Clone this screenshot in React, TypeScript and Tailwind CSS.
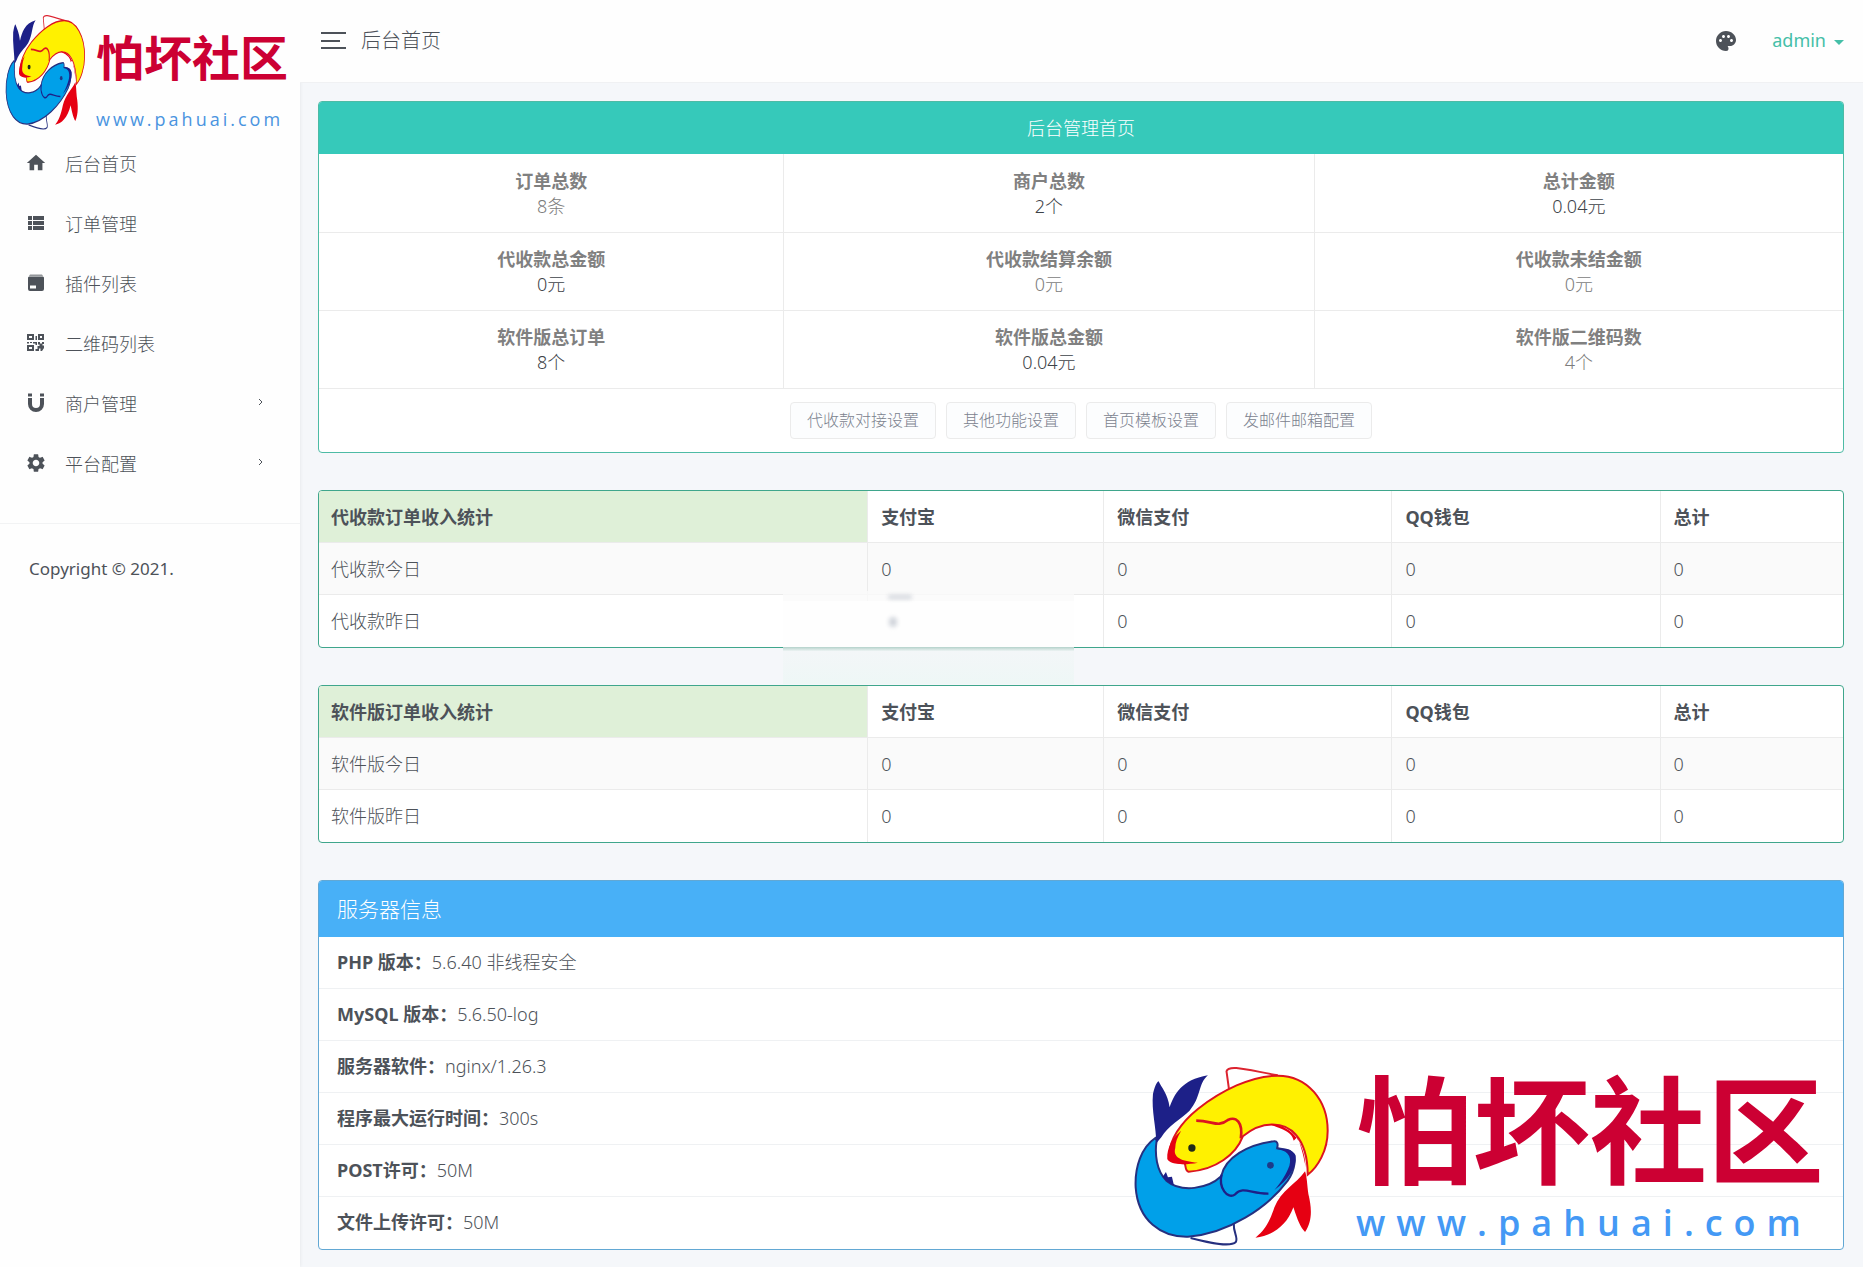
import React from "react";
import { MdHome, MdPalette, MdSettings } from "react-icons/md";

function FishMark({ className }: { className: string }) {
  return (
    <svg className={className} viewBox="95 70 595 555" preserveAspectRatio="none" aria-hidden="true">
      <path
        d="M160 295 C200 240 250 230 300 330 L520 240 L625 400 L560 440 L420 530 L110 470Z"
        fill="#fff"
      />
      <path d="M384 150 L376 92 C382 70 440 88 530 104" fill="#fff" stroke="#dc2430" strokeWidth="6" />
      <path d="M398 550 C396 576 412 590 404 604 C388 620 330 608 268 592" fill="#fff" stroke="#26307f" strokeWidth="6" />
      <path
        d="M206 348 C200 300 240 245 290 205 C360 150 450 105 530 105 C620 105 680 180 680 270 C680 330 650 380 620 402 C620 350 608 310 585 283 C550 240 480 240 425 287 C405 340 345 388 262 393 C250 390 255 375 250 368 C230 368 215 362 206 348Z"
        fill="#fff100"
        stroke="#dc1420"
        strokeWidth="6"
      />
      <path d="M222 322 C214 350 240 362 290 366 C250 374 205 372 198 355 C196 320 215 290 240 270 C228 290 222 305 222 322Z" fill="#e60012" />
      <path d="M285 240 C335 240 350 262 380 238 C405 226 426 245 419 293" fill="none" stroke="#dc1420" strokeWidth="8" />
      <path d="M500 250 C560 250 610 290 614 380 C606 340 600 315 588 290 L578 300 C575 285 565 268 500 250Z" fill="#e60012" />
      <path
        d="M612 392 C585 430 540 450 520 500 C505 545 490 570 463 591 C510 585 555 560 577 500 C590 540 598 560 612 574 C635 540 632 500 622 460 C618 430 618 410 612 392Z"
        fill="#e60012"
      />
      <path
        d="M162 292 C120 320 100 380 103 440 C110 540 180 590 260 588 C380 580 500 500 560 420 C580 390 592 345 565 330 C550 324 538 326 528 322 C532 310 528 300 518 302 C440 312 372 350 360 407 C320 445 240 457 195 420 C165 390 160 340 166 300Z"
        fill="#00a0e9"
        stroke="#26307f"
        strokeWidth="6"
      />
      <path d="M522 326 C556 326 574 345 565 375 C555 400 545 418 520 448 C560 418 588 380 584 345 C575 325 548 322 522 326Z" fill="#1d2088" />
      <path d="M361 402 C352 440 378 478 402 461 C425 435 450 460 502 459" fill="none" stroke="#1d2088" strokeWidth="7" />
      <path d="M184 408 L194 394 L200 410 L212 408 L218 434 C205 430 192 420 184 408Z" fill="#1d2088" />
      <path
        d="M165 308 C165 260 150 210 155 160 C160 140 165 125 172 122 C180 140 200 160 205 200 C220 160 240 118 320 104 C290 130 300 170 265 210 C240 235 200 255 180 290Z"
        fill="#1d2088"
      />
      <circle cx="272" cy="322" r="11" fill="#222a18" />
      <circle cx="508" cy="374" r="10" fill="#1d3a88" />
    </svg>
  );
}

const iconClass = "h-[22px] w-[22px] shrink-0 fill-[#4d5259]";

function ListIcon() {
  return (
    <svg className={iconClass} viewBox="0 0 22 22" aria-hidden="true">
      <path d="M3 4h4v4H3zM8 4h11v4H8zM3 9h4v4H3zM8 9h11v4H8zM3 14h4v4H3zM8 14h11v4H8z" />
    </svg>
  );
}
function BoxIcon() {
  return (
    <svg className={iconClass} viewBox="0 0 22 22" aria-hidden="true">
      <path d="M5 2.500h12l1 1.500H4z" opacity=".6" />
      <path fillRule="evenodd" d="M4 4.500h14l1 1V17a2 2 0 0 1-2 2H5a2 2 0 0 1-2-2V5.500zM5 13.500v3h6v-3z" />
    </svg>
  );
}
function QrIcon() {
  return (
    <svg className={iconClass} viewBox="0 0 22 22" aria-hidden="true">
      <path
        fillRule="evenodd"
        d="M2 2h7v6H2zM4 4v2h3V4zM13 2h6v6h-6zM15 4v2h2V4zM2 13h7v6H2zM4 15v2h3v-2zM10.500 4h1.500v4h-1.500zM2 10h2v1.500H2zM5 10h2v1H5zM8 10h4v3h-1.500v-1.500H8zM13 10h2v1.500h2V10h2v2h-1.500v1.500H19V16l-2 3h-1.500v-2.500H14V19h-3.500v-2h2v-3h2v-1.500H13z"
      />
    </svg>
  );
}
function MagnetIcon() {
  return (
    <svg className={iconClass} viewBox="0 0 22 22" aria-hidden="true">
      <path d="M3 1.500h4v3H3zM15 1.500h4v3h-4zM3 6h4v6a4 4 0 0 0 8 0V6h4v6a8 8 0 0 1-16 0z" />
    </svg>
  );
}

const nav = [
  { label: "后台首页", icon: <MdHome className={iconClass} /> },
  { label: "订单管理", icon: <ListIcon /> },
  { label: "插件列表", icon: <BoxIcon /> },
  { label: "二维码列表", icon: <QrIcon /> },
  { label: "商户管理", icon: <MagnetIcon />, sub: true },
  { label: "平台配置", icon: <MdSettings className={iconClass} />, sub: true },
];

function Sidebar() {
  return (
    <aside className="w-[300px] shrink-0 bg-[#fefefe] shadow-[0_0_4px_rgba(0,0,0,0.08)]">
      <div className="flex h-[134px] items-start gap-[10px] pl-[5px] pt-[13px]">
        <FishMark className="h-[119px] w-[81px] shrink-0" />
        <div className="flex flex-col whitespace-nowrap">
          <span className="text-[48px] font-bold leading-[90px] text-[#cc0033]">怕坏社区</span>
          <span className="font-['Open_Sans',sans-serif] text-[18px] font-normal leading-[32px] tracking-[3px] text-[#4a94e0]">www.pahuai.com</span>
        </div>
      </div>
      <nav>
        <ul>
          {nav.map((n) => (
            <li key={n.label}>
              <a href="#" className="flex h-[60px] items-center pl-[25px] pr-[35px]">
                <span className="pb-[2px]">{n.icon}</span>
                <span className="ml-[18px] flex-1 pt-px">{n.label}</span>
                {n.sub && (
                  <svg className="mb-1 h-[9px] w-[9px]" viewBox="0 0 9 9" fill="none" stroke="#4d5259" aria-hidden="true">
                    <path d="M3 1l3 3-3 3" />
                  </svg>
                )}
              </a>
            </li>
          ))}
        </ul>
      </nav>
      <div className="mt-[29px] border-t border-[#f2f3f4] px-[29px] pt-8">
        <p className="text-[17px] font-normal leading-[26px]">Copyright © 2021.</p>
      </div>
    </aside>
  );
}

const stats = [
  [["订单总数", "8条", 1], ["商户总数", "2个", 0], ["总计金额", "0.04元", 0]],
  [["代收款总金额", "0元", 0], ["代收款结算余额", "0元", 1], ["代收款未结金额", "0元", 1]],
  [["软件版总订单", "8个", 0], ["软件版总金额", "0.04元", 0], ["软件版二维码数", "4个", 1]],
] as [string, string, number][][];

const actions = ["代收款对接设置", "其他功能设置", "首页模板设置", "发邮件邮箱配置"];

function Overview() {
  return (
    <section className="overflow-hidden rounded border border-[#4dbba5] bg-white">
      <h2 className="bg-[#36c9ba] text-center leading-[52px] text-white">后台管理首页</h2>
      <table className="w-full table-fixed text-center">
        <colgroup>
          <col className="w-[30.500%]" />
          <col className="w-[34.800%]" />
          <col />
        </colgroup>
        <tbody>
          {stats.map((row, i) => (
            <tr key={i} className="border-b border-[#ebebeb]">
              {row.map(([label, value, muted]) => (
                <td key={label} className="h-[78px] border-l border-[#ebebeb] pt-[2px] leading-[25px] first:border-l-0">
                  <b className="block font-bold text-[#808080]">{label}</b>
                  <span className={muted ? "text-[#7c7c7c]" : "text-[#3d4248]"}>{value}</span>
                </td>
              ))}
            </tr>
          ))}
        </tbody>
      </table>
      <div className="flex justify-center gap-[10px] pb-[13px] pt-[13px]">
        {actions.map((a) => (
          <button key={a} className="h-[37px] rounded-sm border border-[#ebebeb] bg-[#fcfdfe] px-4 text-[16px] text-[#7b828e]">
            {a}
          </button>
        ))}
      </div>
    </section>
  );
}

function Income({ title, rows }: { title: string; rows: string[] }) {
  return (
    <section className="overflow-hidden rounded border border-[#3fa68c] bg-white">
      <table className="w-full table-fixed text-left">
        <colgroup>
          <col className="w-[36%]" />
          <col className="w-[15.500%]" />
          <col className="w-[18.900%]" />
          <col className="w-[17.600%]" />
          <col />
        </colgroup>
        <thead>
          <tr>
            <th className="h-[52px] bg-[#dff0d8] px-3 pt-[2px]">{title}</th>
            {["支付宝", "微信支付", "QQ钱包", "总计"].map((h) => (
              <th key={h} className="border-l border-[#ebebeb] px-[13px] pt-[2px]">{h}</th>
            ))}
          </tr>
        </thead>
        <tbody>
          {rows.map((r) => (
            <tr key={r} className="border-t border-[#ebebeb] odd:bg-[#fafafa]">
              <td className="h-[52px] px-3 pt-[2px]">{r}</td>
              {[0, 1, 2, 3].map((k) => (
                <td key={k} className="border-l border-[#ebebeb] px-[13px] pt-[2px]">0</td>
              ))}
            </tr>
          ))}
        </tbody>
      </table>
    </section>
  );
}

function Smudge() {
  return (
    <div aria-hidden="true" className="pointer-events-none absolute -bottom-[36px] left-[465px] h-[93px] w-[291px]">
      <div className="h-[10px] bg-[#fafafa]/80" />
      <div className="h-[46px] bg-[#fefefe]" />
      <div className="h-1 bg-gradient-to-b from-[#b4d2cb] to-[#edf3f3]" />
      <div className="h-[33px] bg-gradient-to-b from-[#f3f6f8] to-[#eef7f6]" />
      <div className="absolute left-[105px] top-1 h-1 w-6 rounded-full bg-gray-300 blur-[2px]" />
      <div className="absolute left-[106px] top-[26px] h-[10px] w-2 rounded-full bg-gray-300 blur-[2px]" />
    </div>
  );
}

const server = [
  ["PHP 版本：", "5.6.40 非线程安全"],
  ["MySQL 版本：", "5.6.50-log"],
  ["服务器软件：", "nginx/1.26.3"],
  ["程序最大运行时间：", "300s"],
  ["POST许可：", "50M"],
  ["文件上传许可：", "50M"],
];

function Watermark() {
  return (
    <div aria-hidden="true" className="pointer-events-none absolute bottom-0 right-[18px] flex items-start gap-[25px] whitespace-nowrap">
      <FishMark className="h-[185px] w-[198px]" />
      <div className="flex w-[470px] flex-col">
        <span className="text-[117px] font-bold leading-[132px] text-[#cc0033]">怕坏社区</span>
        <span className="font-['Open_Sans',sans-serif] text-[36px] font-semibold leading-[54px] tracking-[11px] text-[#4499f5]">www.pahuai.com</span>
      </div>
    </div>
  );
}

export default function App() {
  return (
    <div className="flex min-h-screen bg-[#f5f7fa] font-['Noto_Sans','Noto_Sans_CJK_SC',sans-serif] text-[18px] font-light text-[#4d5259]">
      <Sidebar />
      <div className="min-w-0 flex-1">
        <header className="flex h-[83px] items-center border-b border-[#f0f1f3] bg-[#fefefe] pb-px pl-[21px] pr-[19px]">
          <button aria-label="菜单" className="mr-[14px]">
            <svg className="h-[18px] w-[26px]" viewBox="0 0 26 18" fill="#4d5259" aria-hidden="true">
              <path d="M0 0h25v2H0zM0 8h19v2H0zM0 15h25v2H0z" />
            </svg>
          </button>
          <h1 className="flex-1 text-[20px] font-light leading-7">后台首页</h1>
          <button aria-label="主题" className="mr-[34px]">
            <MdPalette className="h-6 w-6" />
          </button>
          <button className="flex items-center gap-2 font-normal text-[#45bfa8]">
            admin
            <span className="mt-1 border-x-[5px] border-t-[5px] border-x-transparent border-t-[#45bfa8]" />
          </button>
        </header>
        <main className="flex flex-col gap-[37px] pb-4 pl-[18px] pr-[19px] pt-[18px]">
          <Overview />
          <div className="relative">
            <Income title="代收款订单收入统计" rows={["代收款今日", "代收款昨日"]} />
            <Smudge />
          </div>
          <Income title="软件版订单收入统计" rows={["软件版今日", "软件版昨日"]} />
          <div className="relative">
            <section className="overflow-hidden rounded border border-[#62a8d4] bg-white">
              <h2 className="bg-[#48b0f7] px-[18px] text-[21px] font-light leading-[56px] text-white">服务器信息</h2>
              <dl>
                {server.map(([k, v]) => (
                  <div key={k} className="flex h-[52px] items-center border-b border-[#eff1f3] px-[18px] last:border-b-0">
                    <dt className="font-bold">{k}</dt>
                    <dd>{v}</dd>
                  </div>
                ))}
              </dl>
            </section>
            <Watermark />
          </div>
        </main>
      </div>
    </div>
  );
}
